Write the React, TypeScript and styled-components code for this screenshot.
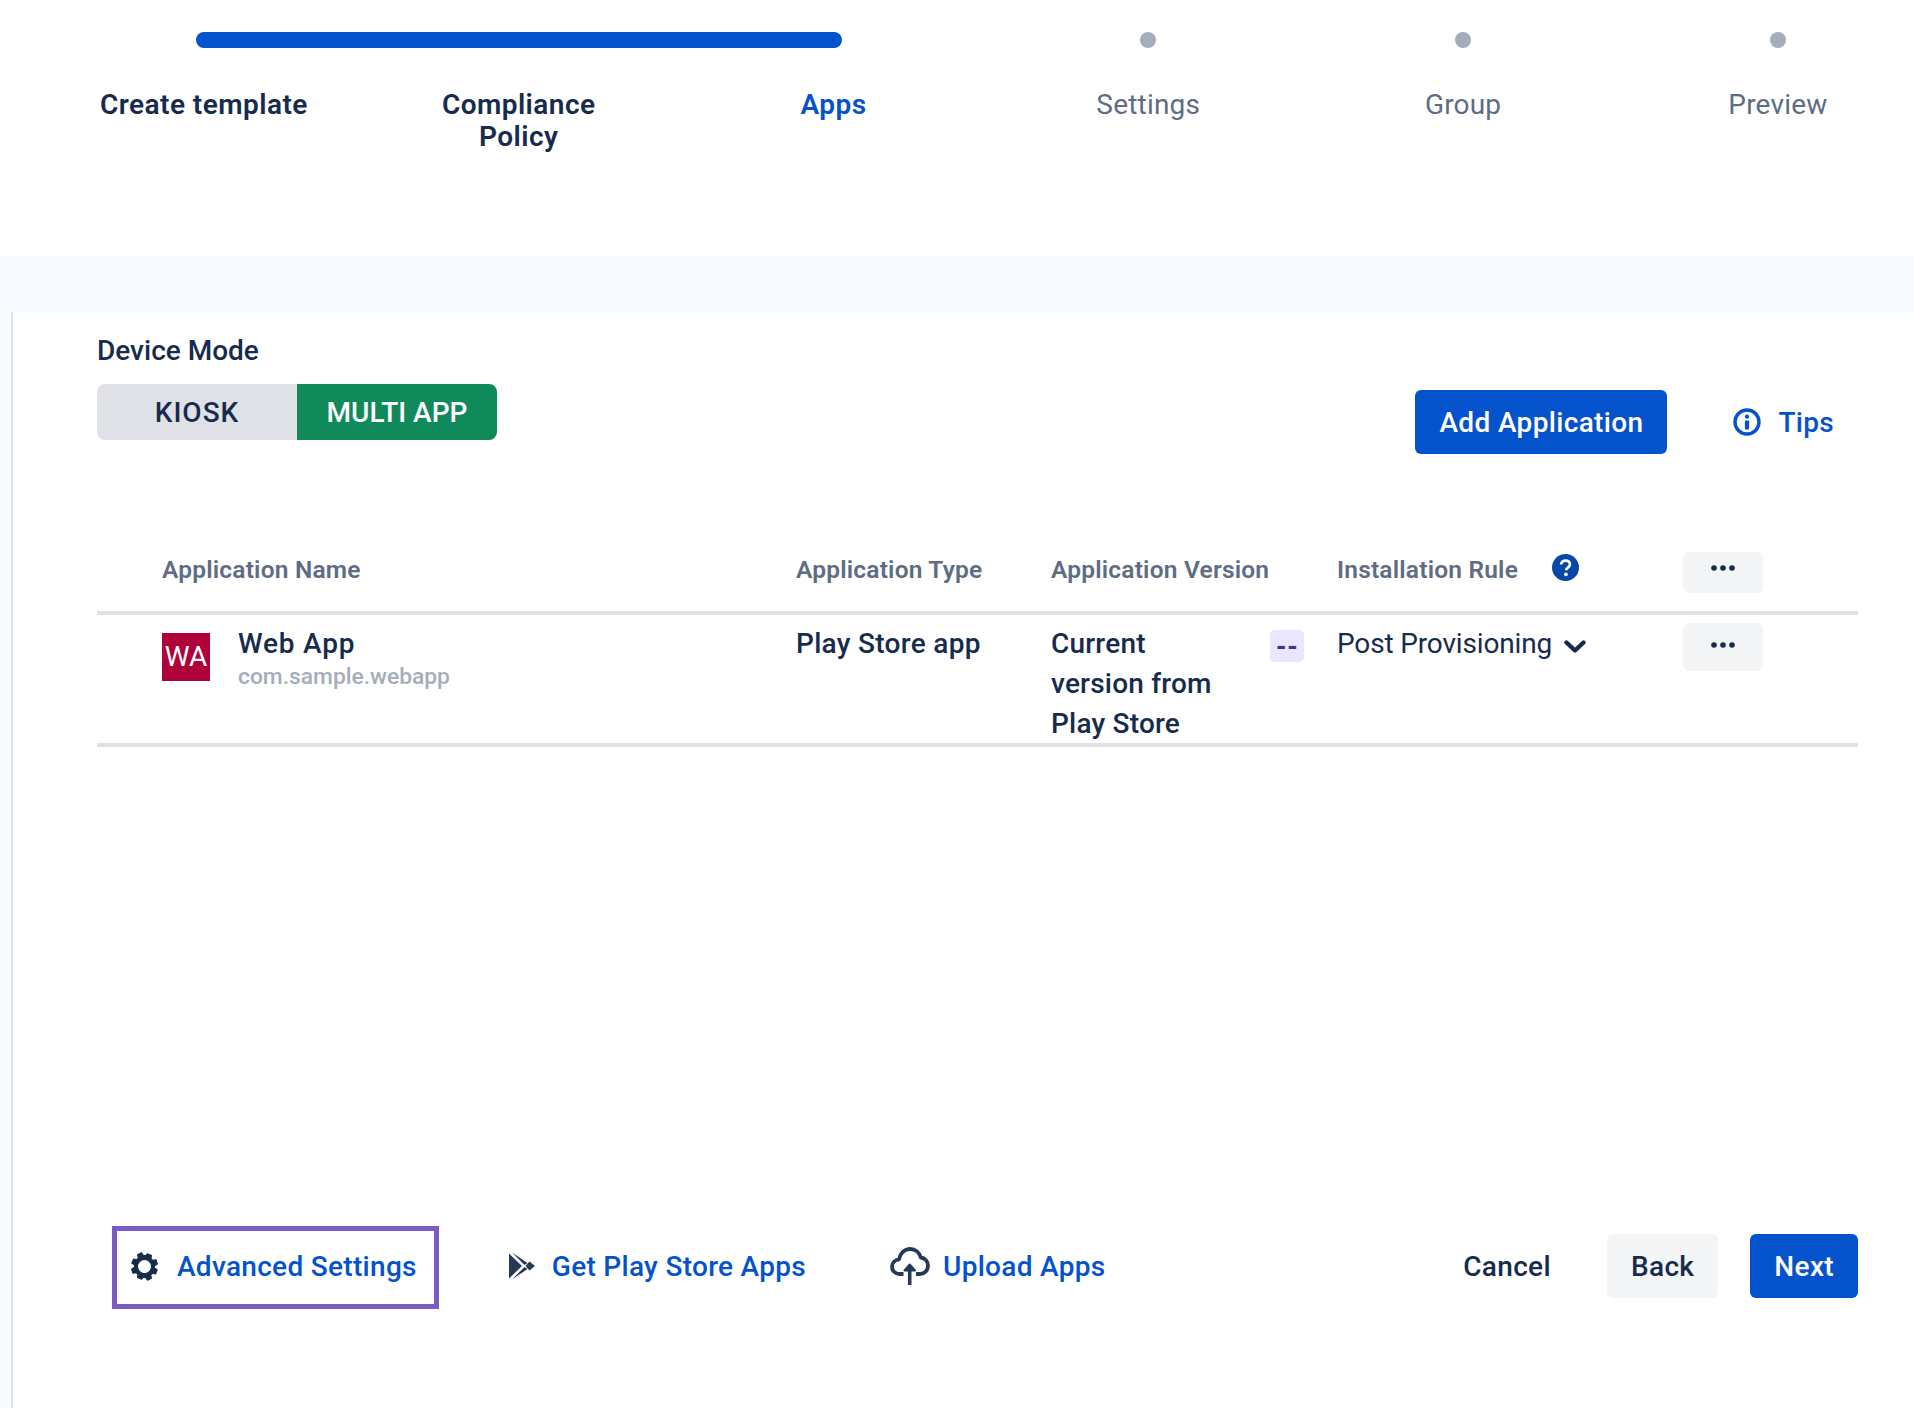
import React from 'react';
import styled, { createGlobalStyle } from 'styled-components';

const navy = '#172b4d';
const blue = '#0452cc';
const grey = '#5e6c84';
const tint = '#f7faff';

const GlobalStyle = createGlobalStyle`
  html, body {
    margin: 0;
    background: #fff;
  }
  body {
    font-family: Roboto, "Liberation Sans", sans-serif;
    color: ${navy};
  }
`;

const Page = styled.div`
  width: 1914px;
  height: 1408px;
  display: flex;
  flex-direction: column;
  overflow: hidden;
  background: #fff;
`;

const Stepper = styled.div`
  height: 256px;
  padding: 32px 0 0 46.5px;
  box-sizing: border-box;
  flex-shrink: 0;
`;

const StepGrid = styled.div`
  display: grid;
  grid-template-columns: repeat(6, 314.8px);
  align-items: center;
`;

const Progress = styled.div`
  grid-column: 1 / 4;
  height: 16px;
  margin: 0 148.9px 0 149.5px;
  border-radius: 8px;
  background: ${blue};
`;

const Dot = styled.div`
  justify-self: center;
  width: 16px;
  height: 16px;
  border-radius: 50%;
  background: #a5adba;
`;

const StepLabel = styled.div<{ $state: 'done' | 'active' | 'todo' }>`
  margin-top: 41px;
  align-self: start;
  text-align: center;
  font-size: 28px;
  line-height: 32px;
  letter-spacing: ${(p) => (p.$state === 'todo' ? 0.2 : 0.45)}px;
  font-weight: ${(p) => (p.$state === 'todo' ? 400 : 600)};
  color: ${(p) => (p.$state === 'active' ? blue : p.$state === 'todo' ? grey : navy)};
`;

const Band = styled.div`
  height: 56px;
  flex-shrink: 0;
  background: ${tint};
`;

const Body = styled.div`
  flex: 1;
  display: flex;
  background: ${tint};
`;

const Content = styled.div`
  flex: 1;
  margin-left: 11px;
  border-left: 2px solid #dfe1e6;
  background: #fff;
  padding: 19px 56px 99px 84px;
  display: flex;
  flex-direction: column;
`;

const Toolbar = styled.div`
  display: flex;
  justify-content: space-between;
  align-items: flex-start;
`;

const FieldLabel = styled.div`
  font-size: 28px;
  line-height: 40px;
  font-weight: 500;
`;

const Toggle = styled.div`
  display: flex;
  width: 400px;
  height: 56px;
  margin-top: 13px;
  border-radius: 8px;
  overflow: hidden;
`;

const ToggleOption = styled.div<{ $on?: boolean }>`
  flex: 1;
  display: flex;
  align-items: center;
  justify-content: center;
  font-size: 28px;
  font-weight: 500;
  letter-spacing: ${(p) => (p.$on ? 0 : 1)}px;
  background: ${(p) => (p.$on ? '#108a5b' : '#dfe1e6')};
  color: ${(p) => (p.$on ? '#fff' : navy)};
`;

const ToolbarActions = styled.div`
  display: flex;
  align-items: center;
  gap: 66px;
  padding: 59px 24px 0 0;
`;

const Button = styled.div<{ $kind?: 'primary' | 'soft' | 'plain' }>`
  height: 64px;
  display: flex;
  align-items: center;
  padding: 0 24px;
  border-radius: 6px;
  font-size: 28px;
  font-weight: 500;
  letter-spacing: 0.35px;
  background: ${(p) => (p.$kind === 'primary' ? blue : p.$kind === 'soft' ? '#f4f5f7' : 'transparent')};
  color: ${(p) => (p.$kind === 'primary' ? '#fff' : navy)};
`;

const IconLink = styled.div<{ $gap: number }>`
  display: flex;
  align-items: center;
  gap: ${(p) => p.$gap}px;
  font-size: 28px;
  font-weight: 500;
  letter-spacing: 0.3px;
  color: ${blue};
`;

const HeadRow = styled.div`
  display: grid;
  grid-template-columns: 634px 255px 286px 346px 175px;
  padding-left: 65px;
  margin-top: 98px;
  height: 59px;
  border-bottom: 4px solid #dfe1e6;
  font-size: 24.5px;
  line-height: 36px;
  font-weight: 600;
  letter-spacing: 0.2px;
  color: ${grey};
`;

const DataRow = styled.div`
  display: grid;
  grid-template-columns: 634px 255px 286px 346px 175px;
  padding: 8px 0 0 65px;
  height: 132px;
  box-sizing: border-box;
  border-bottom: 4px solid #dfe1e6;
  font-size: 28px;
  line-height: 40px;
  font-weight: 500;
  letter-spacing: 0.3px;
`;

const TextCell = styled.div`
  padding-top: 1px;
`;

const NameCell = styled.div`
  display: flex;
  gap: 28px;
  align-items: flex-start;
`;

const AppLogo = styled.div`
  width: 48px;
  height: 48px;
  margin-top: 10px;
  display: flex;
  align-items: center;
  justify-content: center;
  background: #b0003a;
  color: #fff;
  font-size: 28px;
  font-weight: 400;
  letter-spacing: 0;
`;

const AppName = styled.div`
  letter-spacing: 0.8px;
`;

const AppId = styled.div`
  font-size: 22.8px;
  line-height: 26px;
  font-weight: 500;
  letter-spacing: 0;
  color: #a5adba;
`;

const VersionCell = styled.div`
  display: flex;
  justify-content: space-between;
  padding-right: 33px;
`;

const VersionText = styled(TextCell)`
  width: 180px;
  letter-spacing: 0.2px;
`;

const VersionBadge = styled.div`
  width: 34px;
  height: 32px;
  margin-top: 7px;
  display: flex;
  align-items: center;
  justify-content: center;
  border-radius: 5px;
  background: #eae6ff;
  color: #403294;
  font-size: 26px;
  line-height: 1;
  font-weight: 800;
`;

const RuleCell = styled.div`
  display: flex;
  align-items: flex-start;
  gap: 12px;
  font-weight: 400;
  letter-spacing: -0.15px;
`;

const HeadRule = styled.div`
  display: flex;
  align-items: flex-start;
  gap: 34px;
`;

const MoreButton = styled.div<{ $h: number; $top: number }>`
  width: 80px;
  height: ${(p) => p.$h}px;
  display: flex;
  justify-content: center;
  padding-top: ${(p) => p.$top}px;
  box-sizing: border-box;
  border-radius: 6px;
  background: #f4f5f7;
`;

const Footer = styled.div`
  margin-top: auto;
  display: flex;
  align-items: center;
  padding-left: 15px;
`;

const Highlight = styled.div`
  border: 5px solid #7b5cc4;
  padding: 0 17px 3px 13px;
  height: 83px;
  box-sizing: border-box;
  display: flex;
  align-items: center;
  margin-right: 70px;
`;

const FooterRight = styled.div`
  margin-left: auto;
  align-self: flex-start;
  padding-top: 8px;
  display: flex;
  align-items: center;
  gap: 32px;
`;

const FooterLink = styled.div<{ $right?: number }>`
  margin: 0 ${(p) => p.$right ?? 0}px 3px 0;
`;

const InfoIcon = () => (
  <svg width="28" height="28" viewBox="0 0 28 28" fill="none">
    <circle cx="14" cy="14" r="12" stroke={blue} strokeWidth="3.4" />
    <rect x="11.9" y="12.5" width="4.2" height="9" rx="1" fill={blue} />
    <circle cx="14" cy="8.6" r="2.2" fill={blue} />
  </svg>
);

const HelpIcon = () => (
  <svg width="27" height="27" viewBox="0 0 26 26" style={{ marginTop: 2 }}>
    <circle cx="13" cy="13" r="13" fill="#0747a6" />
    <path d="M8.8 10.2c0-2.4 1.9-3.9 4.3-3.9 2.4 0 4.2 1.500 4.2 3.600 0 1.700-1 2.500-2.100 3.300-1 .7-1.500 1.200-1.500 2.500" fill="none" stroke="#fff" strokeWidth="2.6" />
    <circle cx="13.4" cy="19.6" r="1.8" fill="#fff" />
  </svg>
);

const Dots = () => (
  <svg width="26" height="8" viewBox="0 0 26 8">
    <circle cx="4" cy="4" r="2.8" fill={navy} />
    <circle cx="13" cy="4" r="2.8" fill={navy} />
    <circle cx="22" cy="4" r="2.8" fill={navy} />
  </svg>
);

const Chevron = () => (
  <svg width="22" height="13" viewBox="0 0 22 13" fill="none" style={{ marginTop: 17 }}>
    <path d="M2.5 2.5L11 10.5 19.5 2.5" stroke={navy} strokeWidth="4.4" strokeLinecap="round" strokeLinejoin="round" />
  </svg>
);

const GearIcon = () => (
  <svg width="29" height="29" viewBox="-1 -1 26 26" fill={navy}>
    <path
      transform="rotate(22.5 12 12)"
      fillRule="evenodd"
      stroke={navy}
      strokeWidth="1"
      strokeLinejoin="round"
      d="M10 .5h4l.6 2.700c.7.2 1.400.5 2 .9l2.600-1.600 2.600 3-1.800 2.400c.3.600.6 1.300.7 2l3 .5v4l-3 .6c-.2.700-.4 1.300-.7 1.900l1.800 2.500-2.600 2.900-2.600-1.600c-.6.400-1.300.7-2 .9L14 23.500h-4l-.6-2.700c-.7-.2-1.400-.5-2-.9l-2.600 1.600-2.600-2.900 1.800-2.500c-.3-.6-.6-1.200-.7-1.900L.3 13.600v-4l3-.5c.1-.7.4-1.400.7-2L2.200 4.700l2.600-3 2.600 1.600c.6-.4 1.300-.7 2-.9L10 .5zm2 5.200a6.300 6.300 0 1 0 0 12.600 6.300 6.300 0 0 0 0-12.600z"
    />
  </svg>
);

const PlayIcon = () => (
  <svg width="26" height="28" viewBox="0 0 26 28" fill="#253858">
    <path d="M0 1.500V26.500L13 14Z" />
    <path d="M3 .5L18.500 11 15.500 13Z" />
    <path d="M3 27.500L18.500 17 15.500 15Z" />
    <path d="M20.500 9.500L26 14 20.500 18.500 16.500 14Z" />
  </svg>
);

const UploadIcon = () => (
  <svg width="40" height="38" viewBox="0 0 40 38" fill="none" stroke="#253858" strokeWidth="3.8" strokeLinejoin="round">
    <path d="M13.500 27H9.500C5 27 2 23.500 2 19.800 2 15.800 5 12.800 9 12.400 10 6.500 14.500 2 20.200 2 25.500 2 29.500 5.500 30.800 10.500 35 11 38 14.500 38 18.800 38 23.500 34.500 27 30 27H26" />
    <path d="M19.700 38V19" strokeWidth="3.6" />
    <path d="M14.500 23.500L19.700 17.500 25 23.500Z" fill="#253858" strokeWidth="2" />
  </svg>
);

export default function App() {
  return (
    <Page>
      <GlobalStyle />
      <Stepper>
        <StepGrid>
          <Progress />
          <Dot />
          <Dot />
          <Dot />
          <StepLabel $state="done">Create template</StepLabel>
          <StepLabel $state="done">
            Compliance
            <br />
            Policy
          </StepLabel>
          <StepLabel $state="active">Apps</StepLabel>
          <StepLabel $state="todo">Settings</StepLabel>
          <StepLabel $state="todo">Group</StepLabel>
          <StepLabel $state="todo">Preview</StepLabel>
        </StepGrid>
      </Stepper>
      <Band />
      <Body>
        <Content>
          <Toolbar>
            <div>
              <FieldLabel>Device Mode</FieldLabel>
              <Toggle>
                <ToggleOption>KIOSK</ToggleOption>
                <ToggleOption $on>MULTI APP</ToggleOption>
              </Toggle>
            </div>
            <ToolbarActions>
              <Button $kind="primary">Add Application</Button>
              <IconLink $gap={17}>
                <InfoIcon />
                Tips
              </IconLink>
            </ToolbarActions>
          </Toolbar>

          <HeadRow>
            <div>Application Name</div>
            <div>Application Type</div>
            <div>Application Version</div>
            <HeadRule>
              Installation Rule
              <HelpIcon />
            </HeadRule>
            <MoreButton $h={41} $top={12}>
              <Dots />
            </MoreButton>
          </HeadRow>
          <DataRow>
            <NameCell>
              <AppLogo>WA</AppLogo>
              <TextCell>
                <AppName>Web App</AppName>
                <AppId>com.sample.webapp</AppId>
              </TextCell>
            </NameCell>
            <TextCell>Play Store app</TextCell>
            <VersionCell>
              <VersionText>Current version from Play Store</VersionText>
              <VersionBadge>--</VersionBadge>
            </VersionCell>
            <RuleCell>
              <TextCell>Post Provisioning</TextCell>
              <Chevron />
            </RuleCell>
            <MoreButton $h={48} $top={18}>
              <Dots />
            </MoreButton>
          </DataRow>

          <Footer>
            <Highlight>
              <IconLink $gap={18}>
                <GearIcon />
                Advanced Settings
              </IconLink>
            </Highlight>
            <FooterLink $right={84}>
              <IconLink $gap={17}>
                <PlayIcon />
                Get Play Store Apps
              </IconLink>
            </FooterLink>
            <FooterLink>
              <IconLink $gap={13}>
                <UploadIcon />
                Upload Apps
              </IconLink>
            </FooterLink>
            <FooterRight>
              <Button $kind="plain">Cancel</Button>
              <Button $kind="soft">Back</Button>
              <Button $kind="primary">Next</Button>
            </FooterRight>
          </Footer>
        </Content>
      </Body>
    </Page>
  );
}
